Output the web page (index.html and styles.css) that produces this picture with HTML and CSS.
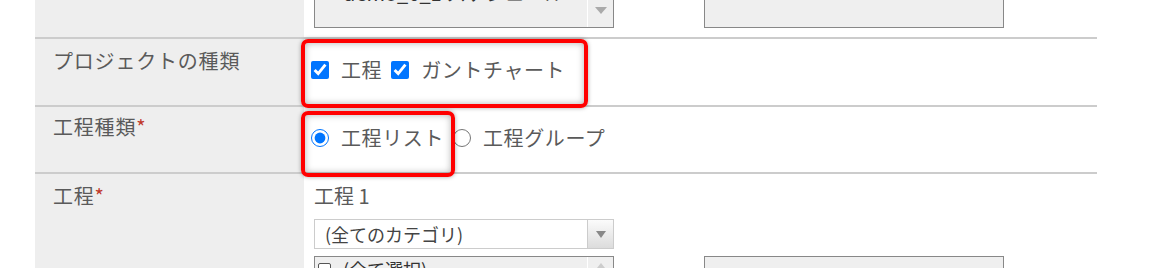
FILE: index.html
```html
<!DOCTYPE html>
<html lang="ja">
<head>
<meta charset="utf-8" />
<title>プロジェクト設定</title>
<link rel="stylesheet" href="styles.css">
</head>
<body>
<div class="form">
  <div class="row row-top">
    <div class="label"></div>
    <div class="field">
      <div class="pair">
        <div class="listbox">
          <div class="opts opts-end">
            <div class="opt"><span class="tick"></span>demo_6_1 スケジュール</div>
          </div>
          <div class="scroll scroll-end"><span class="tri-down"></span></div>
        </div>
        <div class="listbox"></div>
      </div>
    </div>
  </div>

  <div class="row row-kind">
    <div class="label">プロジェクトの種類</div>
    <div class="field">
      <div class="choices">
        <label><input type="checkbox" checked>工程</label>
        <label><input type="checkbox" checked>ガントチャート</label>
      </div>
      <div class="mark mark-kind"></div>
    </div>
  </div>

  <div class="row row-type">
    <div class="label">工程種類<span class="req">*</span></div>
    <div class="field">
      <div class="choices">
        <label><input type="radio" name="type" checked>工程リスト</label>
        <label><input type="radio" name="type">工程グループ</label>
      </div>
      <div class="mark mark-type"></div>
    </div>
  </div>

  <div class="row row-process">
    <div class="label">工程<span class="req">*</span></div>
    <div class="field">
      <div class="caption">工程 1</div>
      <div class="select">
        <div class="select-text">(全てのカテゴリ)</div>
        <div class="select-btn"><span class="tri-down"></span></div>
      </div>
      <div class="pair pair-low">
        <div class="listbox">
          <div class="opts">
            <div class="opt opt-small"><span class="tick"></span>(全て選択)</div>
          </div>
          <div class="scroll"><span class="tri-up"></span></div>
        </div>
        <div class="listbox"></div>
      </div>
    </div>
  </div>
</div>
</body>
</html>
```

FILE: styles.css
```css
*{ box-sizing:border-box; }
body{
  margin:0;
  background:#fff;
  color:#5a5a5a;
  font-family:"Noto Sans CJK JP", "Noto Sans", sans-serif;
}
.form{
  position:relative;
  width:1062px;
  margin:-57px 0 0 35px;
}
.row{
  display:grid;
  grid-template-columns:269px 793px;
  border-bottom:2px solid #ccc;
}
.label{
  background:#eee;
  padding:7px 18px;
  font-size:20px;
  line-height:30px;
  letter-spacing:.8px;
}
.req{ color:#c0392b; }
.field{
  position:relative;
  padding:7px 10px;
  font-size:20px;
  line-height:30px;
}
.row-top .field{ padding:10px 10px 9px; }
.row-kind{ height:68px; }
.row-type{ height:67px; }
.row-type .label{ padding-top:5px; }
.row-process{ min-height:160px; border-bottom:0; }

/* checkbox / radio list */
.choices{
  display:flex;
  align-items:center;
  margin:9px 0 0 -3px;
  letter-spacing:.6px;
}
.choices label{
  display:flex;
  align-items:center;
  margin-right:9px;
}
.choices input{
  width:18px;
  height:18px;
  margin:0 12px 0 0;
  accent-color:#0075ff;
}

/* red highlight over the screenshot */
.mark{
  position:absolute;
  z-index:1;
  left:-3px;
  border:4px solid #f00;
  border-radius:7px;
  box-shadow:0 0 4px rgba(0,0,0,.35), inset 0 0 7px rgba(0,0,0,.3);
}
.mark-kind{ top:0; width:287px; height:69px; }
.mark-type{ top:4px; width:154px; height:66px; }

/* list boxes */
.pair{ display:flex; gap:90px; }
.pair-low{ margin-top:7px; }
.listbox{
  display:flex;
  width:300px;
  height:75px;
  border:1px solid #888;
  background:#efefef;
  overflow:hidden;
}
.pair-low .listbox{ height:100px; }
.opts{
  flex:1;
  display:flex;
  flex-direction:column;
  color:#333;
}
.opts-end{ justify-content:flex-end; padding-bottom:22px; }
.opt{
  display:flex;
  align-items:center;
  padding-left:3px;
  line-height:24px;
  white-space:nowrap;
}
.opt-small{ font-size:18px; line-height:22px; padding-top:1px; }
.tick{
  width:13px;
  height:13px;
  margin-right:12px;
  border:1px solid #555;
  border-radius:2px;
  background:#fff;
}
.scroll{
  width:26px;
  border-left:1px solid #fff;
  display:flex;
  flex-direction:column;
  align-items:center;
  padding-top:6px;
}
.scroll-end{ justify-content:flex-end; padding-bottom:13px; }
.tri-down{
  width:0;
  height:0;
  border-left:6px solid transparent;
  border-right:6px solid transparent;
  border-top:7px solid #aaa;
}
.tri-up{
  width:0;
  height:0;
  border-left:4px solid transparent;
  border-right:4px solid transparent;
  border-bottom:5px solid #ccc;
}

/* single select */
.caption{ color:#5a5a5a; }
.select{
  display:flex;
  width:300px;
  height:30px;
  margin-top:8px;
  border:1px solid #ccc;
  background:#fff;
  font-size:18px;
  line-height:28px;
  color:#444;
}
.select-text{ flex:1; padding-left:10px; }
.select-btn{
  width:26px;
  border-left:1px solid #ccc;
  background:linear-gradient(#fbfbfb, #dcdcdc);
  display:flex;
  align-items:center;
  justify-content:center;
}
.select-btn .tri-down{ border-top-color:#888; border-width:7px 5px 0; }
```
